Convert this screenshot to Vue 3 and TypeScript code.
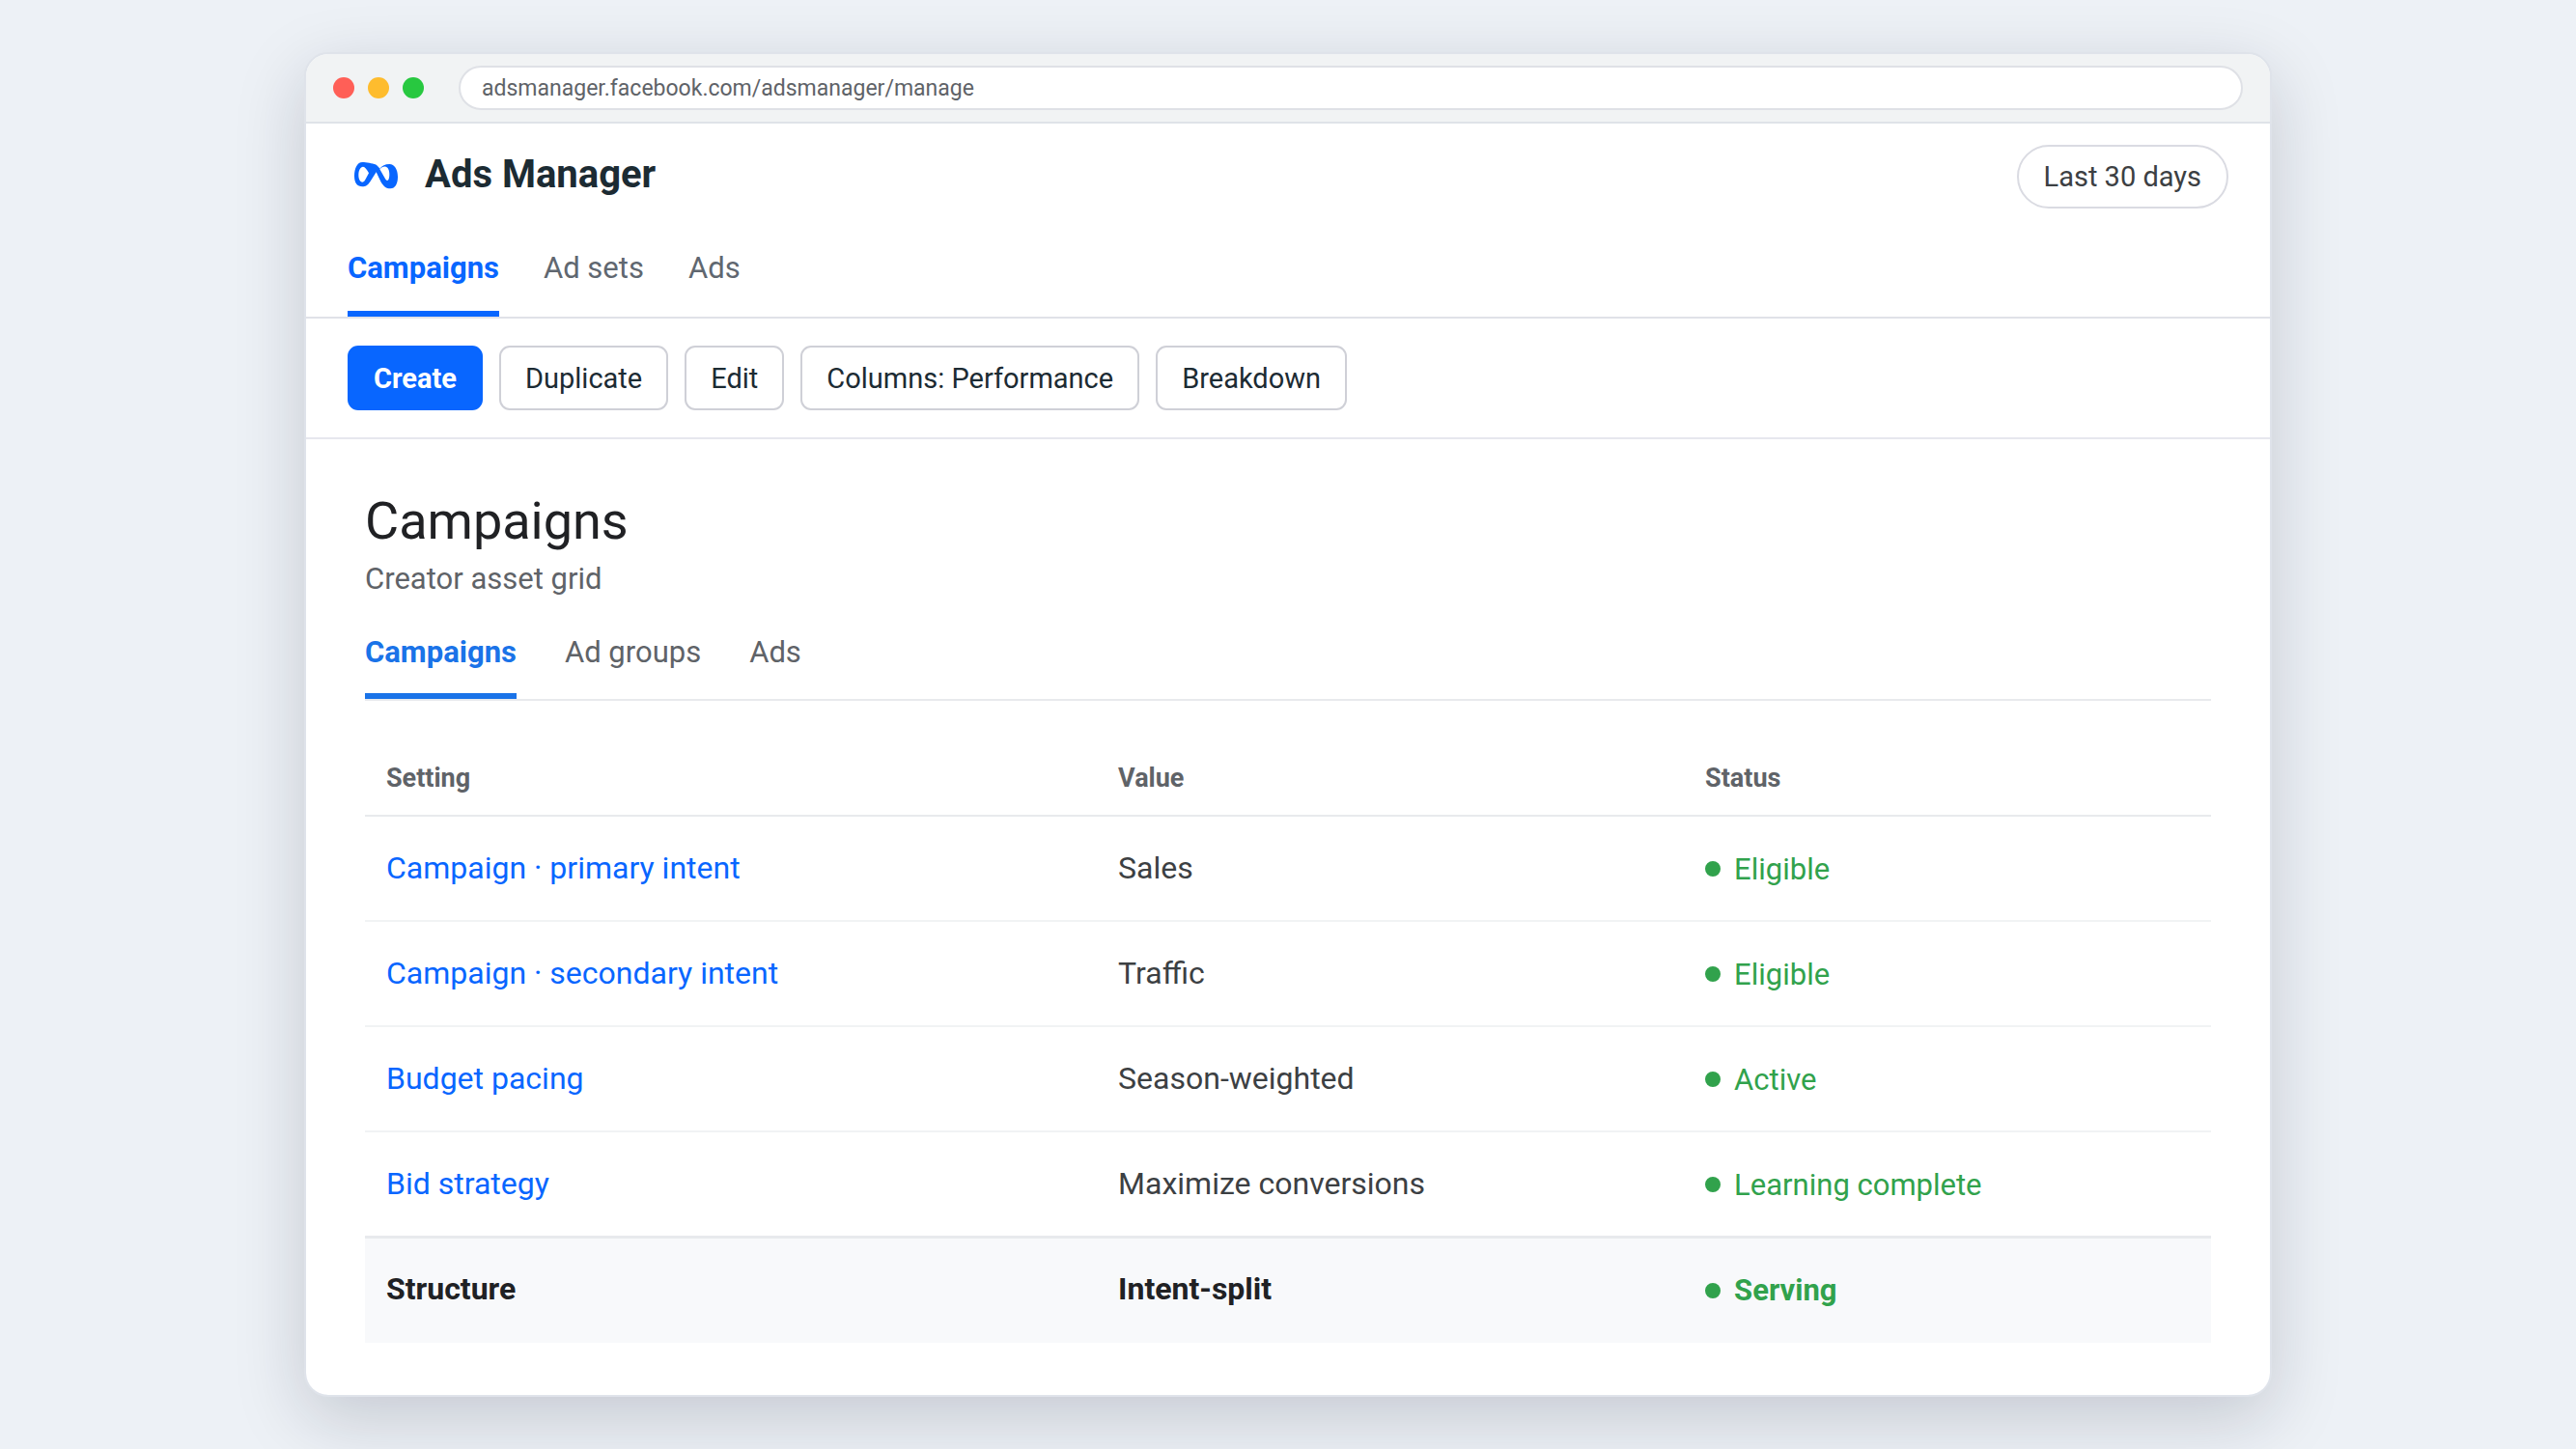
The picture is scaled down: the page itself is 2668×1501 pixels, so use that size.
<script setup lang="ts">
import { ref } from 'vue'

interface Row {
  setting: string
  value: string
  status: string
}

const address = ref('adsmanager.facebook.com/adsmanager/manage')
const levelTabs = ['Campaigns', 'Ad sets', 'Ads']
const gridTabs = ['Campaigns', 'Ad groups', 'Ads']
const actions = ['Create', 'Duplicate', 'Edit', 'Columns: Performance', 'Breakdown']
const activeLevel = ref('Campaigns')
const activeGrid = ref('Campaigns')

const rows: Row[] = [
  { setting: 'Campaign · primary intent', value: 'Sales', status: 'Eligible' },
  { setting: 'Campaign · secondary intent', value: 'Traffic', status: 'Eligible' },
  { setting: 'Budget pacing', value: 'Season-weighted', status: 'Active' },
  { setting: 'Bid strategy', value: 'Maximize conversions', status: 'Learning complete' },
]
const total: Row = { setting: 'Structure', value: 'Intent-split', status: 'Serving' }
</script>

<template>
  <div class="page">
    <div class="window">
      <div class="chrome">
        <div class="lights">
          <span class="light red"></span>
          <span class="light amber"></span>
          <span class="light green"></span>
        </div>
        <input v-model="address" class="address" type="text" aria-label="Address" />
      </div>

      <header class="header">
        <div class="brand">
          <svg class="logo" viewBox="0 0 156 108" aria-hidden="true">
            <path
              fill="#0866ff"
              fill-rule="evenodd"
              d="M9 58C9 34 18 15 34 15C46 15 66 19 74 22C80 25 84 30 88 35C95 26 104 21 118 21C134 21 144 38 144 60C144 82 136 97 121 97C108 97 100 90 92 77L77 46L58 76C50 88 44 91 34 91C18 91 9 80 9 58ZM22 54C22 68 27 77 34 77C39 77 42 72 46 64L54 49C48 38 42 29 36 29C28 29 22 40 22 54ZM88 37L106 68C110 73 114 73 116 67C120 56 118 38 112 32C104 25 95 29 88 37Z"
            />
          </svg>
          <h1 class="brand-name">Ads Manager</h1>
        </div>
        <button class="range" type="button">Last 30 days</button>
      </header>

      <nav class="tabs level-tabs" aria-label="Level">
        <button
          v-for="tab in levelTabs"
          :key="tab"
          type="button"
          class="tab"
          :class="{ active: tab === activeLevel }"
          @click="activeLevel = tab"
        >
          {{ tab }}
        </button>
      </nav>

      <div class="toolbar">
        <button
          v-for="(action, i) in actions"
          :key="action"
          type="button"
          class="action"
          :class="{ primary: i === 0 }"
        >
          {{ action }}
        </button>
      </div>

      <main class="content">
        <h2 class="title">Campaigns</h2>
        <p class="subtitle">Creator asset grid</p>

        <nav class="tabs grid-tabs" aria-label="Grid">
          <button
            v-for="tab in gridTabs"
            :key="tab"
            type="button"
            class="tab"
            :class="{ active: tab === activeGrid }"
            @click="activeGrid = tab"
          >
            {{ tab }}
          </button>
        </nav>

        <table class="grid">
          <colgroup>
            <col class="col-setting" />
            <col class="col-value" />
            <col />
          </colgroup>
          <thead>
            <tr>
              <th scope="col">Setting</th>
              <th scope="col">Value</th>
              <th scope="col">Status</th>
            </tr>
          </thead>
          <tbody>
            <tr v-for="row in rows" :key="row.setting">
              <td><a class="link" href="#">{{ row.setting }}</a></td>
              <td>{{ row.value }}</td>
              <td><span class="status">{{ row.status }}</span></td>
            </tr>
          </tbody>
          <tfoot>
            <tr>
              <td>{{ total.setting }}</td>
              <td>{{ total.value }}</td>
              <td><span class="status">{{ total.status }}</span></td>
            </tr>
          </tfoot>
        </table>
      </main>
    </div>
  </div>
</template>

<style>
body {
  margin: 0;
  background: #edf1f6;
}
</style>

<style scoped>
.page {
  box-sizing: border-box;
  min-height: 100vh;
  padding: 54px 48px;
  background: #edf1f6;
  font-family: Roboto, 'Liberation Sans', sans-serif;
  color: #3c4043;
  overflow: hidden;
}

.window {
  box-sizing: border-box;
  max-width: 2038px;
  margin: 0 auto;
  border: 2px solid #dfe3ea;
  border-radius: 25px;
  background: #fff;
  background-clip: padding-box;
  box-shadow: 0 22px 72px rgba(15, 23, 42, 0.18);
  overflow: hidden;
}

button {
  font-family: inherit;
  cursor: pointer;
}

.chrome {
  display: flex;
  align-items: center;
  gap: 36px;
  padding: 12px 28px;
  border-bottom: 2px solid #dfe3e8;
  background: #f1f3f4;
}

.lights {
  display: flex;
  gap: 14px;
}

.light {
  width: 22px;
  height: 22px;
  border-radius: 50%;
}

.red {
  background: #ff5f57;
}

.amber {
  background: #febc2e;
}

.green {
  background: #28c840;
}

.address {
  box-sizing: border-box;
  flex: 1;
  min-width: 0;
  height: 46px;
  padding: 0 22px;
  border: 2px solid #dfe1e6;
  border-radius: 23px;
  background: #fff;
  color: #5f6368;
  font-family: inherit;
  font-size: 23px;
  outline: none;
}

.header {
  display: flex;
  align-items: flex-start;
  justify-content: space-between;
  padding: 22px 43px 22px 47px;
}

.brand {
  display: flex;
  align-items: center;
  gap: 24px;
  padding-top: 7px;
}

.logo {
  width: 52px;
  height: 36px;
}

.brand-name {
  margin: 0;
  font-size: 40px;
  line-height: 48px;
  font-weight: 700;
  color: #1c2b33;
}

.range {
  height: 66px;
  padding: 0 26px;
  border: 2px solid #dadbe2;
  border-radius: 33px;
  background: #fff;
  color: #3c4043;
  font-size: 29px;
}

.tabs {
  display: flex;
}

.tab {
  padding: 0;
  border: 0;
  border-bottom: 6px solid transparent;
  background: none;
  font-size: 31px;
  line-height: 36px;
}

.tab.active {
  font-weight: 700;
}

.level-tabs {
  gap: 46px;
  padding: 0 43px;
  border-bottom: 2px solid #e0e2e8;
}

.level-tabs .tab {
  padding: 22px 0 26px;
  color: #606770;
}

.level-tabs .tab.active {
  color: #0866ff;
  border-color: #0866ff;
}

.toolbar {
  display: flex;
  gap: 17px;
  padding: 28px 43px;
  border-bottom: 2px solid #e6e7ee;
}

.action {
  height: 67px;
  padding: 0 25px;
  border: 2px solid #cfd0d7;
  border-radius: 11px;
  background: #fff;
  color: #1c2b33;
  font-size: 29px;
}

.action.primary {
  border-color: #0866ff;
  background: #0866ff;
  color: #fff;
  font-weight: 700;
}

.content {
  padding: 51px 61px 54px;
}

.title {
  margin: 0;
  font-size: 54px;
  line-height: 68px;
  font-weight: 400;
  color: #202124;
}

.subtitle {
  margin: 8px 0 0;
  font-size: 31px;
  line-height: 36px;
  color: #5f6368;
}

.grid-tabs {
  gap: 50px;
  margin-top: 22px;
  border-bottom: 2px solid #e8eaed;
}

.grid-tabs .tab {
  padding: 18px 0 24px;
  color: #5f6368;
}

.grid-tabs .tab.active {
  color: #1a73e8;
  border-color: #1a73e8;
}

.grid {
  width: 100%;
  margin-top: 40px;
  border-collapse: separate;
  border-spacing: 0;
  table-layout: fixed;
}

.col-setting {
  width: 39.65%;
}

.col-value {
  width: 31.8%;
}

th,
td {
  box-sizing: border-box;
  padding: 0 22px;
  text-align: left;
  vertical-align: middle;
}

th {
  height: 80px;
  padding-top: 2px;
  border-bottom: 2px solid #e8eaed;
  font-size: 27px;
  font-weight: 700;
  color: #5f6368;
}

td {
  height: 109px;
  padding-bottom: 2px;
  border-bottom: 2px solid #f1f3f4;
  font-size: 32px;
}

tbody tr:last-child td {
  height: 107px;
  border-bottom: 0;
}

tfoot td {
  height: 111px;
  padding-bottom: 4px;
  border-top: 3px solid #e8eaed;
  border-bottom: 0;
  background: #f8f9fb;
  color: #202124;
  font-weight: 700;
}

.link {
  color: #0866ff;
  text-decoration: none;
}

.status {
  display: inline-flex;
  align-items: center;
  gap: 14px;
  color: #31a24c;
  font-size: 31px;
}

.status::before {
  content: '';
  width: 16px;
  height: 16px;
  border-radius: 50%;
  background: #31a24c;
}
</style>
